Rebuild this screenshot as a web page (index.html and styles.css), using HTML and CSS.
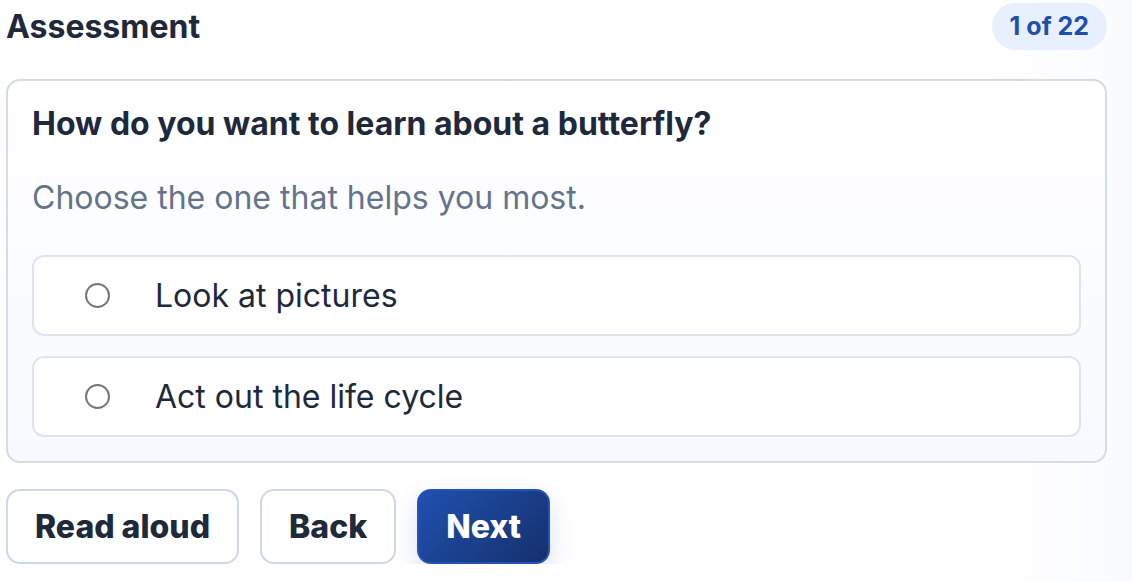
FILE: index.html
```html
<!DOCTYPE html>
<html lang="en">
<head>
    <meta charset="UTF-8">
    <meta name="viewport" content="width=device-width, initial-scale=1.0">
    <title>Assessment</title>
    <link rel="stylesheet" href="styles.css">
</head>
<body>
    <div class="assessment">
        <!-- Title and progress -->
        <div class="assessment-header">
            <h1>Assessment</h1>
            <span class="progress-badge">1 of 22</span>
        </div>

        <!-- Question card -->
        <div class="question-card">
            <h2 class="question">How do you want to learn about a butterfly?</h2>
            <p class="hint">Choose the one that helps you most.</p>
            <label class="option">
                <input type="radio" name="answer" value="pictures">
                <span>Look at pictures</span>
            </label>
            <label class="option">
                <input type="radio" name="answer" value="act">
                <span>Act out the life cycle</span>
            </label>
        </div>

        <div class="actions">
            <button type="button" class="btn">Read aloud</button>
            <button type="button" class="btn">Back</button>
            <button type="button" class="btn btn-primary">Next</button>
        </div>
    </div>
</body>
</html>
```

FILE: styles.css
```css
body {
    margin: 0;
    font-family: 'Inter', 'Noto Sans', sans-serif;
    background: linear-gradient(90deg, #ffffff 85%, #fafbfd 100%);
    color: #1e293b;
}
.assessment {
    padding: 3px 25px 0 6px;
}
.assessment-header {
    display: flex;
    justify-content: space-between;
    align-items: center;
    margin-bottom: 29px;
}
h1 {
    margin: 0;
    font-size: 32px;
    font-weight: 700;
    line-height: 40px;
}
.progress-badge {
    background: #e8f0fe;
    color: #1e4eb0;
    font-size: 25px;
    font-weight: 700;
    padding: 9px 18px;
    border-radius: 24px;
    line-height: 29px;
}
.question-card {
    border: 2px solid #d3dce7;
    border-radius: 14px;
    background: linear-gradient(180deg, #ffffff 0%, #f7f9fe 100%);
    padding: 23px 24px 24px;
}
.question {
    margin: 0;
    font-size: 32px;
    font-weight: 700;
    line-height: 40px;
}
.hint {
    margin: 34px 0 37px;
    font-size: 32px;
    line-height: 40px;
    color: #64748b;
}
.option {
    display: flex;
    align-items: center;
    background: #ffffff;
    border: 2px solid #dfe5ee;
    border-radius: 12px;
    height: 77px;
    padding: 0 51px;
    font-size: 32px;
    cursor: pointer;
}
.option + .option {
    margin-top: 20px;
}
.option input {
    appearance: none;
    width: 25px;
    height: 25px;
    margin: 0 45px 0 0;
    border: 2px solid #767676;
    border-radius: 50%;
    background: #ffffff;
}
.actions {
    display: flex;
    gap: 21px;
    margin-top: 26px;
}
.btn {
    font-family: inherit;
    font-size: 32px;
    font-weight: 800;
    color: #1e293b;
    background: #ffffff;
    border: 2px solid #cfd9e6;
    border-radius: 14px;
    height: 75px;
    padding: 0 27px;
    cursor: pointer;
}
.btn-primary {
    color: #ffffff;
    background: linear-gradient(135deg, #1f51b0 0%, #16306c 100%);
    border-color: #2453b8;
    box-shadow: 0 10px 24px rgba(37, 84, 184, 0.18);
}
```
